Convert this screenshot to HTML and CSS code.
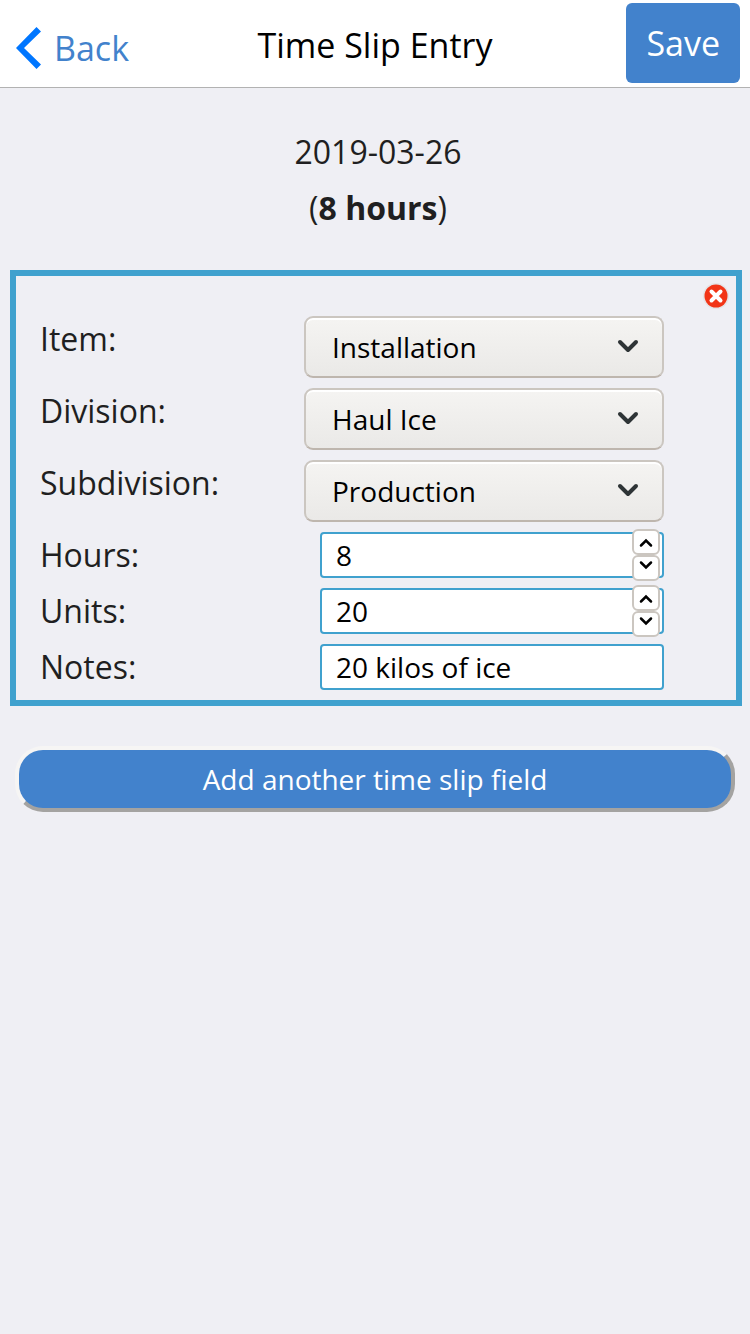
FILE: index.html
```html
<!DOCTYPE html>
<html lang="en">
<head>
<meta charset="utf-8">
<meta name="viewport" content="width=device-width, initial-scale=1">
<title>Time Slip Entry</title>
<link rel="stylesheet" href="styles.css">
</head>
<body>
<header class="navbar">
  <a class="back" href="#">
    <svg class="back-icon" viewBox="0 0 26 42" aria-hidden="true"><path d="M20.500 0 25 4.500 8 21 25 37.500 20.500 42 0 21Z"/></svg>
    <span>Back</span>
  </a>
  <h1 class="title">Time Slip Entry</h1>
  <button class="save" type="button">Save</button>
</header>
<main class="page">
  <div class="summary">
    <p class="summary-line">2019-03-26</p>
    <p class="summary-line">(<strong>8 hours</strong>)</p>
  </div>
  <form class="slip">
    <button class="remove" type="button" aria-label="Remove">
      <svg class="remove-icon" viewBox="0 0 28 28" aria-hidden="true">
        <circle class="remove-halo" cx="14" cy="14" r="13"/>
        <circle class="remove-disc" cx="14" cy="14" r="11.500"/>
        <path class="remove-cross" d="M9.500 9.500 18.500 18.500M18.500 9.500 9.500 18.500"/>
      </svg>
    </button>
    <div class="row">
      <label class="label" for="item">Item:</label>
      <div class="field">
        <select class="select" id="item"><option>Installation</option></select>
        <svg class="chevron" viewBox="0 0 22 16" aria-hidden="true"><path d="M3 4 11 12 19 4"/></svg>
      </div>
    </div>
    <div class="row">
      <label class="label" for="division">Division:</label>
      <div class="field">
        <select class="select" id="division"><option>Haul Ice</option></select>
        <svg class="chevron" viewBox="0 0 22 16" aria-hidden="true"><path d="M3 4 11 12 19 4"/></svg>
      </div>
    </div>
    <div class="row">
      <label class="label" for="subdivision">Subdivision:</label>
      <div class="field">
        <select class="select" id="subdivision"><option>Production</option></select>
        <svg class="chevron" viewBox="0 0 22 16" aria-hidden="true"><path d="M3 4 11 12 19 4"/></svg>
      </div>
    </div>
    <div class="row">
      <label class="label" for="hours">Hours:</label>
      <div class="field field-input">
        <input class="input" id="hours" type="number" value="8">
        <div class="stepper">
          <button class="step" type="button" aria-label="Increase hours"><svg class="step-icon" viewBox="0 0 14 10" aria-hidden="true"><path d="M2 7.500 7 2.500 12 7.500"/></svg></button>
          <button class="step step-down" type="button" aria-label="Decrease hours"><svg class="step-icon" viewBox="0 0 14 10" aria-hidden="true"><path d="M2 2.500 7 7.500 12 2.500"/></svg></button>
        </div>
      </div>
    </div>
    <div class="row">
      <label class="label" for="units">Units:</label>
      <div class="field field-input">
        <input class="input" id="units" type="number" value="20">
        <div class="stepper">
          <button class="step" type="button" aria-label="Increase units"><svg class="step-icon" viewBox="0 0 14 10" aria-hidden="true"><path d="M2 7.500 7 2.500 12 7.500"/></svg></button>
          <button class="step step-down" type="button" aria-label="Decrease units"><svg class="step-icon" viewBox="0 0 14 10" aria-hidden="true"><path d="M2 2.500 7 7.500 12 2.500"/></svg></button>
        </div>
      </div>
    </div>
    <div class="row">
      <label class="label" for="notes">Notes:</label>
      <div class="field field-input">
        <input class="input" id="notes" type="text" value="20 kilos of ice">
      </div>
    </div>
  </form>
  <button class="add" type="button">Add another time slip field</button>
</main>
</body>
</html>
```
FILE: styles.css
```css
* {
  box-sizing: border-box;
}

body {
  margin: 0;
  min-height: 100vh;
  background: #efeff4;
  color: #1f1f21;
  font-family: "Open Sans", "Noto Sans", sans-serif;
  font-size: 32px;
}

button,
input,
select {
  margin: 0;
  font-family: inherit;
}

.navbar {
  display: grid;
  grid-template-columns: 1fr auto 1fr;
  align-items: center;
  height: 88px;
  padding: 0 10px 2px;
  background: #fff;
  border-bottom: 1px solid #b2b2b2;
  font-size: 34px;
}

.back {
  display: flex;
  align-items: center;
  gap: 12px;
  padding: 10px 0 0 6px;
  color: #4282cc;
  text-decoration: none;
}

.back-icon {
  width: 26px;
  height: 42px;
  fill: #0076ff;
}

.title {
  margin: 0;
  padding-top: 4px;
  color: #000;
  font-size: 34px;
  font-weight: 400;
}

.save {
  justify-self: end;
  height: 80px;
  padding: 0 20px;
  border: 0;
  border-radius: 6px;
  background: #4282cc;
  color: #fff;
  font-size: 34px;
}

.page {
  padding: 36px 8px 0 10px;
}

.summary {
  padding-left: 4px;
  text-align: center;
}

.summary-line {
  margin: 0;
  line-height: 56px;
}

.slip {
  position: relative;
  display: grid;
  gap: 10px;
  margin-top: 34px;
  padding: 40px 72px 10px 24px;
  border: 6px solid #40a1ce;
}

.remove {
  position: absolute;
  top: 6px;
  right: 6px;
  display: flex;
  padding: 0;
  border: 0;
  background: none;
}

.remove-icon {
  width: 28px;
  height: 28px;
}

.remove-halo {
  fill: #e4e4e6;
}

.remove-disc {
  fill: #f23517;
}

.remove-cross {
  fill: none;
  stroke: #fff;
  stroke-width: 4;
  stroke-linecap: round;
}

.row {
  display: grid;
  grid-template-columns: 264px 1fr;
  align-items: start;
}

.label {
  line-height: 46px;
}

.field {
  position: relative;
  display: flex;
}

.field-input {
  margin-left: 16px;
}

.select {
  width: 100%;
  height: 62px;
  padding: 0 60px 0 26px;
  appearance: none;
  border: 2px solid #cbc6c0;
  border-bottom-color: #beb6ae;
  border-radius: 9px;
  background: linear-gradient(#f5f4f2, #eae9e7);
  box-shadow: inset 0 2px #fff;
  color: #000;
  font-size: 28px;
}

.chevron {
  position: absolute;
  top: 22px;
  right: 25px;
  width: 22px;
  height: 16px;
  fill: none;
  stroke: #2e3436;
  stroke-width: 4;
  stroke-linecap: round;
  stroke-linejoin: round;
  pointer-events: none;
}

.input {
  width: 100%;
  height: 46px;
  padding: 0 14px;
  appearance: textfield;
  border: 2px solid #40a1ce;
  border-radius: 4px;
  background: #fff;
  color: #000;
  font-size: 28px;
}

.stepper {
  position: absolute;
  top: -3px;
  right: 4px;
  display: grid;
}

.step {
  display: flex;
  align-items: center;
  justify-content: center;
  width: 28px;
  height: 26px;
  padding: 2px 0 0;
  border: 2px solid #cbc6c0;
  border-radius: 6px;
  background: #fff;
}

.step-down {
  padding: 0 0 6px;
}

.step-icon {
  width: 14px;
  height: 10px;
  fill: none;
  stroke: #000;
  stroke-width: 2.500;
  stroke-linecap: round;
}

.add {
  display: block;
  width: calc(100% - 12px);
  height: 66px;
  margin: 40px 7px 0 5px;
  border: 4px solid;
  border-color: #f6f5f4 #a4a3a1 #a4a3a1 #f6f5f4;
  border-radius: 28px;
  background: #4282cc;
  color: #fff;
  font-size: 28px;
}
```
